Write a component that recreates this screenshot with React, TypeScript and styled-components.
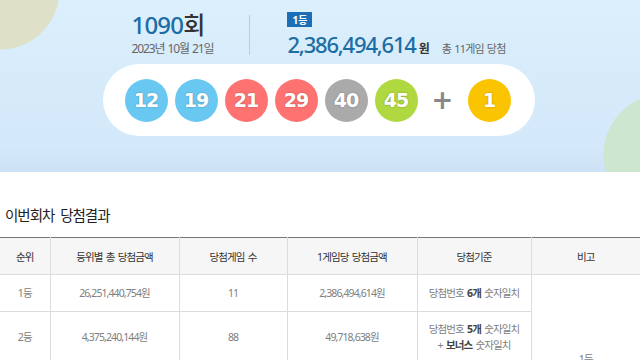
import { createGlobalStyle, styled } from "styled-components";

const GlobalStyle = createGlobalStyle`
    html, body {
        margin: 0;
        padding: 0;
        background: #fff;
        font-family: "Noto Sans", "Noto Sans CJK KR", sans-serif;
        color: #333;
    }
`;

const Banner = styled.section`
    height: 172px;
    box-sizing: border-box;
    padding: 12px 3px 0 0;
    display: flex;
    flex-direction: column;
    align-items: center;
    background:
        radial-gradient(circle at 0px -10px, #dee1c7 0 59px, transparent 60px),
        radial-gradient(circle at 665px 155px, #cde6d0 0 61px, transparent 62px),
        linear-gradient(#dbeffc, #d3e8f9 85%, #cde3f5);
    background-repeat: no-repeat;
`;

const InfoRow = styled.div`
    display: flex;
    align-items: center;
`;

const DrawBlock = styled.div`
    display: flex;
    flex-direction: column;
`;

const DrawTitle = styled.h2`
    margin: 0;
    font-size: 24px;
    line-height: 26px;
    font-weight: 500;
    color: #333;
    letter-spacing: -0.8px;

    strong {
        color: #1c6da6;
        font-weight: 500;
    }
`;

const DrawDate = styled.p`
    margin: 3px 0 0;
    font-size: 12px;
    line-height: 16px;
    color: #666;
    letter-spacing: -1.1px;
    word-spacing: 1px;
`;

const Divider = styled.div`
    width: 1px;
    height: 40px;
    background: #bfcbd6;
    margin: 0 37px 0 36px;
`;

const PrizeBlock = styled.div`
    display: flex;
    flex-direction: column;
    align-items: flex-start;
`;

const RankBadge = styled.span`
    display: inline-flex;
    align-items: center;
    justify-content: center;
    width: 25px;
    height: 15px;
    background: #1b6fb6;
    color: #fff;
    font-size: 10px;
    font-weight: 700;
`;

const PrizeLine = styled.div`
    display: flex;
    align-items: baseline;
    margin-top: 4px;
`;

const PrizeAmount = styled.strong`
    font-size: 22px;
    line-height: 26px;
    font-weight: 500;
    color: #1c6da6;
    letter-spacing: -1.2px;
`;

const Won = styled.span`
    font-size: 12px;
    font-weight: 700;
    color: #333;
    margin-left: 3px;
`;

const Winners = styled.span`
    font-size: 11px;
    color: #666;
    margin-left: 12px;
    letter-spacing: -0.8px;
    word-spacing: 1px;
`;

const BallPill = styled.div`
    margin-top: 7px;
    height: 72px;
    box-sizing: border-box;
    padding: 0 24px 0 22px;
    background: #fff;
    border-radius: 36px;
    display: flex;
    align-items: center;
    gap: 7px;
`;

const Ball = styled.span<{ $color: string }>`
    width: 43px;
    height: 43px;
    border-radius: 50%;
    background: ${props => props.$color};
    color: #fff;
    display: flex;
    align-items: center;
    justify-content: center;
    font-family: "DejaVu Sans", sans-serif;
    font-size: 19px;
    font-weight: 700;
    letter-spacing: -1px;
    text-shadow: 0 0 2px rgba(0, 0, 0, 0.3);
`;

const Plus = styled.span`
    width: 36px;
    text-align: center;
    font-family: "DejaVu Sans", sans-serif;
    font-size: 26px;
    font-weight: 700;
    color: #888;
`;

const ResultSection = styled.section`
    padding-top: 32px;
`;

const SectionTitle = styled.h3`
    margin: 0 0 11px 5px;
    font-size: 14.5px;
    line-height: 22px;
    font-weight: 400;
    color: #222;
    letter-spacing: -1px;
    word-spacing: 3px;
`;

const Table = styled.table`
    width: 640px;
    border-collapse: collapse;
    table-layout: fixed;
    border-top: 1px solid #777;
    font-size: 10.5px;
    letter-spacing: -0.9px;
    word-spacing: 1.5px;
`;

const Th = styled.th`
    height: 36px;
    padding: 0;
    background: #f6f6f6;
    font-weight: 400;
    color: #333;
    border: 1px solid #dcdcdc;
    border-top: none;

    &:first-child { border-left: none; }
    &:last-child { border-right: none; }
`;

const Td = styled.td<{ $tall?: boolean }>`
    height: ${props => (props.$tall ? "49px" : "36px")};
    padding: 0;
    text-align: center;
    color: #808080;
    line-height: 16px;
    border: 1px solid #dcdcdc;

    &:first-child { border-left: none; }
    &:last-child { border-right: none; }

    b {
        color: #444;
        font-weight: 700;
    }
`;

const NoteCell = styled(Td)`
    vertical-align: top;
    padding-top: 76px;
`;

const balls = [
    { n: 12, color: "#69c8f2" },
    { n: 19, color: "#69c8f2" },
    { n: 21, color: "#ff7272" },
    { n: 29, color: "#ff7272" },
    { n: 40, color: "#aaaaaa" },
    { n: 45, color: "#b0d840" },
];

export default function App() {
    return <>
        <GlobalStyle />
        <Banner>
            <InfoRow>
                <DrawBlock>
                    <DrawTitle><strong>1090</strong>회</DrawTitle>
                    <DrawDate>2023년 10월 21일</DrawDate>
                </DrawBlock>
                <Divider />
                <PrizeBlock>
                    <RankBadge>1등</RankBadge>
                    <PrizeLine>
                        <PrizeAmount>2,386,494,614</PrizeAmount>
                        <Won>원</Won>
                        <Winners>총 11게임 당첨</Winners>
                    </PrizeLine>
                </PrizeBlock>
            </InfoRow>
            <BallPill>
                {balls.map(b => <Ball key={b.n} $color={b.color}>{b.n}</Ball>)}
                <Plus>+</Plus>
                <Ball $color="#fbc400">1</Ball>
            </BallPill>
        </Banner>

        <ResultSection>
            <SectionTitle>이번회차 당첨결과</SectionTitle>
            <Table>
                <colgroup>
                    <col style={{ width: 50 }} />
                    <col style={{ width: 129 }} />
                    <col style={{ width: 108 }} />
                    <col style={{ width: 130 }} />
                    <col style={{ width: 114 }} />
                    <col style={{ width: 109 }} />
                </colgroup>
                <thead>
                    <tr>
                        <Th>순위</Th>
                        <Th>등위별 총 당첨금액</Th>
                        <Th>당첨게임 수</Th>
                        <Th>1게임당 당첨금액</Th>
                        <Th>당첨기준</Th>
                        <Th>비고</Th>
                    </tr>
                </thead>
                <tbody>
                    <tr>
                        <Td>1등</Td>
                        <Td>26,251,440,754원</Td>
                        <Td>11</Td>
                        <Td>2,386,494,614원</Td>
                        <Td>당첨번호 <b>6개</b> 숫자일치</Td>
                        <NoteCell rowSpan={3}>1등</NoteCell>
                    </tr>
                    <tr>
                        <Td $tall>2등</Td>
                        <Td $tall>4,375,240,144원</Td>
                        <Td $tall>88</Td>
                        <Td $tall>49,718,638원</Td>
                        <Td $tall>당첨번호 <b>5개</b> 숫자일치<br />+ <b>보너스</b> 숫자일치</Td>
                    </tr>
                    <tr>
                        <Td>3등</Td>
                        <Td>2,003,417,752원</Td>
                        <Td>2,782</Td>
                        <Td>1,574,693원</Td>
                        <Td>당첨번호 <b>5개</b> 숫자일치</Td>
                    </tr>
                </tbody>
            </Table>
        </ResultSection>
    </>;
}
